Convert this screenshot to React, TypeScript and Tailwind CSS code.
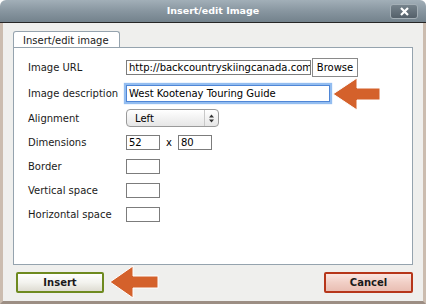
import React from 'react';

const font = { fontFamily: '"DejaVu Sans", Verdana, sans-serif' };

function Field({ w, value = '', focus = false }: { w: string; value?: string; focus?: boolean }) {
  return (
    <div
      className={`${w} flex items-center overflow-hidden whitespace-nowrap bg-white px-[2px] text-[10px] text-black ${
        focus
          ? 'h-[17px] border border-[#4f86d6] shadow-[0_0_1px_2px_#93bdf0]'
          : 'h-[15px] border border-[#7c7c7c]'
      }`}
    >
      {value}
    </div>
  );
}

function Row({ h, label, children }: { h: string; label: string; children?: React.ReactNode }) {
  return (
    <div className={`${h} flex items-center`}>
      <div className="w-[98px] text-[10px] text-[#1a1a1a]">{label}</div>
      <div className="flex items-center">{children}</div>
    </div>
  );
}

export default function App() {
  return (
    <div className="relative h-[304px] w-[426px] bg-white" style={font}>
      <div className="flex h-[304px] w-[426px] flex-col overflow-hidden rounded-t-[6px]">
        {/* title bar */}
        <div className="grid h-[23px] shrink-0 grid-cols-[1fr_auto_1fr] items-center border-b border-[#262626] bg-gradient-to-b from-[#a2afb8] via-[#8896a0] to-[#73828c]">
          <div />
          <div className="text-[9.5px] font-bold text-white">Insert/edit Image</div>
          <div className="flex justify-end pr-[8px]">
            <div className="flex h-[15px] w-[28px] items-center justify-center rounded-[3px] border border-[#a4afb6] bg-gradient-to-b from-[#76838c] to-[#54606a]">
              <svg width="9" height="9" viewBox="0 0 9 9">
                <path d="M1 1 L8 8 M8 1 L1 8" stroke="white" strokeWidth="2.2" />
              </svg>
            </div>
          </div>
        </div>

        {/* body */}
        <div className="flex flex-1 flex-col border-x-[3px] border-b-[3px] border-x-[#cbbcaf] border-b-[#9c8e84] bg-[#efefed] px-[10px] pt-[8px]">
          <div className="flex">
            <div className="flex h-[17px] w-[107px] items-center rounded-t-[3px] border-x border-t border-[#95a3ae] bg-white pl-[9px] text-[10px] text-[#1a1a1a]">
              Insert/edit image
            </div>
          </div>
          <div className="-mt-px h-[218px] border border-[#95a3ae] bg-white pl-[14px] pt-[7px]">
            <Row h="h-[25px]" label="Image URL">
              <Field w="w-[185px]" value="http://backcountryskiingcanada.com" />
              <div className="ml-px flex h-[19px] w-[46px] items-center justify-center border border-[#8a8a8a] bg-white text-[10px] text-black">
                Browse
              </div>
            </Row>
            <Row h="h-[26px]" label="Image description">
              <Field w="w-[204px]" value="West Kootenay Touring Guide" focus />
            </Row>
            <Row h="h-[24px]" label="Alignment">
              <div className="flex h-[18px] w-[93px] items-center rounded-[4px] border border-[#9a9a9a] bg-gradient-to-b from-white to-[#e6e6e6] text-[10px] text-black">
                <span className="flex-1 pl-[8px]">Left</span>
                <span className="flex h-full w-[14px] items-center justify-center border-l border-[#c8c8c8]">
                  <svg width="5" height="9" viewBox="0 0 5 9">
                    <path d="M0 3.5 L2.5 0.5 L5 3.5 Z M0 5.5 L2.5 8.5 L5 5.5 Z" fill="#333" />
                  </svg>
                </span>
              </div>
            </Row>
            <Row h="h-[24px]" label="Dimensions">
              <Field w="w-[34px]" value="52" />
              <span className="mx-[6px] text-[10px] text-black">x</span>
              <Field w="w-[34px]" value="80" />
            </Row>
            <Row h="h-[24px]" label="Border">
              <Field w="w-[34px]" />
            </Row>
            <Row h="h-[25px]" label="Vertical space">
              <Field w="w-[34px]" />
            </Row>
            <Row h="h-[23px]" label="Horizontal space">
              <Field w="w-[34px]" />
            </Row>
          </div>

          {/* buttons */}
          <div className="mt-[7px] flex justify-between pl-[3px]">
            <div className="flex h-[21px] w-[88px] items-center justify-center rounded-[2px] border-2 border-[#6e8a1f] bg-gradient-to-b from-white via-[#f3f3ee] to-[#dedcd2] text-[10px] font-bold text-[#1a1a1a]">
              Insert
            </div>
            <div className="flex h-[21px] w-[89px] items-center justify-center rounded-[2px] border-2 border-[#b6361a] bg-gradient-to-b from-[#fbe6e1] via-[#f1cfc6] to-[#e9beb3] text-[10px] font-bold text-[#1a1a1a]">
              Cancel
            </div>
          </div>
        </div>
      </div>

      {/* annotation arrows */}
      <svg className="pointer-events-none absolute left-0 top-0" width="426" height="304" viewBox="0 0 426 304">
        <polygon
          points="333,94 357,78 357,88 380,88 380,100 357,100 357,110"
          fill="#d4612b"
          stroke="white"
          strokeWidth="1"
        />
        <polygon
          points="110,282 133,266 133,276 158,276 158,288 133,288 133,298"
          fill="#d4612b"
          stroke="white"
          strokeWidth="1"
        />
      </svg>
    </div>
  );
}
